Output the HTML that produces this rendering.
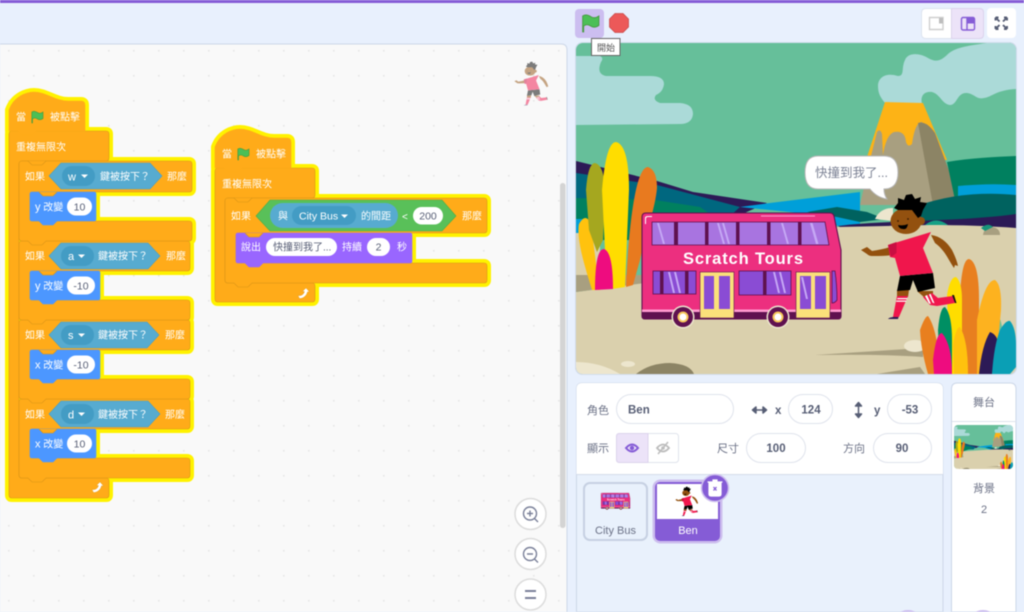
<!DOCTYPE html>
<html><head><meta charset="utf-8"><style>
html,body{margin:0;padding:0;width:1024px;height:612px;overflow:hidden;background:#E8F0FD}
svg{display:block;filter:blur(.45px)}
text{font-family:"Liberation Sans","Noto Sans CJK TC",sans-serif}
.w{fill:#fff;font-size:10px}
.g{fill:#575E75;font-size:10.5px}
.m{fill:#575E75;font-size:11px}
.b{fill:#575E75;font-size:12px;font-weight:bold}
.l{fill:#6b7186;font-size:11px}
</style></head><body>
<svg width="1024" height="612" viewBox="0 0 1024 612" xmlns="http://www.w3.org/2000/svg">
<defs>
<pattern id="dots" x="8" y="0" width="25" height="25" patternUnits="userSpaceOnUse"><rect x="0" y="0" width="1.6" height="1.6" fill="#e6e6e6"/></pattern>
<clipPath id="stc"><rect x="576" y="43" width="440" height="331" rx="7"/></clipPath>
<clipPath id="thc"><rect x="954" y="425" width="59" height="44" rx="4"/></clipPath>
<path id="flag" d="M0.8 12V1C3-.5 5 .5 6.5 1.5C8 2.5 10 2.5 12 1V7.5C10 9 8 9 6.5 8C5 7 3 6.5 1.5 8V12Z" fill="#4CBF56" stroke="#45993D" stroke-width=".6"/>
<path id="h1" d="M9 131V110C14 96 27 92 34 92C46 92 55 101 68 101H81Q85 101 85 105V131H36l-4 4h-10l-4-4Z"/>
<path id="f1" d="M9 134Q9 131 12 131H106Q109 131 109 134V158Q109 161 106 161H22Q19 161 19 164V475Q19 478 22 478H106Q109 478 109 481V495Q109 498 106 498H12Q9 498 9 495Z"/>
<path id="i1" d="M19 164Q19 161 22 161H189Q192 161 192 164V189Q192 192 189 192H33Q30 192 30 195V218Q30 221 33 221H189Q192 221 192 224V238Q192 241 189 241H46l-4 4h-10l-4-4H22Q19 241 19 238Z"/>
<path id="i2" d="M19 244Q19 241 22 241H187Q190 241 190 244V268Q190 271 187 271H33Q30 271 30 274V297Q30 300 33 300H187Q190 300 190 303V317Q190 320 187 320H46l-4 4h-10l-4-4H22Q19 320 19 317Z"/>
<path id="i3" d="M19 323Q19 320 22 320H187Q190 320 190 323V347Q190 350 187 350H33Q30 350 30 353V376Q30 379 33 379H187Q190 379 190 382V396Q190 399 187 399H46l-4 4h-10l-4-4H22Q19 399 19 396Z"/>
<path id="i4" d="M19 402Q19 399 22 399H187Q190 399 190 402V426Q190 429 187 429H33Q30 429 30 432V455Q30 458 33 458H187Q190 458 190 461V475Q190 478 187 478H46l-4 4h-10l-4-4H22Q19 478 19 475Z"/>
<path id="b1" d="M30 194Q30 192 32 192H94Q96 192 96 194V219Q96 221 94 221H57l-4 4h-10l-4-4H32Q30 221 30 219Z"/>
<path id="b2" d="M30 273Q30 271 32 271H98Q100 271 100 273V298Q100 300 98 300H57l-4 4h-10l-4-4H32Q30 300 30 298Z"/>
<path id="b3" d="M30 352Q30 350 32 350H98Q100 350 100 352V377Q100 379 98 379H57l-4 4h-10l-4-4H32Q30 379 30 377Z"/>
<path id="b4" d="M30 431Q30 429 32 429H94Q96 429 96 431V456Q96 458 94 458H57l-4 4h-10l-4-4H32Q30 458 30 456Z"/>
<path id="h2" d="M215 168V147C220 133 233 129 240 129C252 129 261 138 274 138H287Q291 138 291 142V168H242l-4 4h-10l-4-4Z"/>
<path id="f2" d="M215 171Q215 168 218 168H312Q315 168 315 171V195Q315 198 312 198H228Q225 198 225 201V280Q225 283 228 283H312Q315 283 315 286V299Q315 302 312 302H218Q215 302 215 299Z"/>
<path id="i5" d="M225 201Q225 198 228 198H484Q487 198 487 201V230Q487 233 484 233H239Q236 233 236 236V260Q236 263 239 263H484Q487 263 487 266V280Q487 283 484 283H252l-4 4h-10l-4-4H228Q225 283 225 280Z"/>
<path id="p1" d="M236 235Q236 233 238 233H410Q412 233 412 235V261Q412 263 410 263H263l-4 4h-10l-4-4H238Q236 263 236 261Z"/>
<path id="rep" d="M0 7.500C3 8 5.500 7 6.500 3.500L4.500 3.500L8 0L11.500 4L9.500 3.800C8.500 8 5 10.500 1.500 10.500Z" fill="#fff" stroke="#CF8B17" stroke-width=".3"/>

<g id="scene">
<rect x="576" y="43" width="440" height="331" fill="#66BF9A"/>
<path fill="#ABDAD8" d="M576 56H600Q604 58 601 62Q596 74 606 76H650Q664 76 664 84Q663 92 656 95Q652 100 660 103H680Q693 104 693 114Q692 124 680 124L576 125Z"/>
<path fill="#ABDAD8" d="M1016 43H987C965 46 955 48 948 54C940 62 935 62 928 58C920 53 908 52 905 60C901 68 905 76 898 76C885 72 878 78 878 86C878 94 881 98 885 103L922 104C920 96 924 91 932 92C940 94 942 104 950 105C957 105 957 93 966 93C974 93 976 100 984 98C992 97 996 90 1016 89Z"/>
<path fill="#FDB316" d="M885 102L923 103L947 160H866Z"/>
<path fill="#A89F80" d="M860 205L870 160L877 132Q880 128 882 134L883 155Q886 135 894 132Q905 130 906 142Q908 148 912 144Q915 122 922 122L960 205Z"/>
<path fill="#8C8465" d="M918 123Q926 120 935 133L958 195L933 205Z"/>
<path fill="#00805F" d="M947 162C970 158 995 157 1016 156V200H955Z"/>
<path fill="#009FD9" d="M958 186Q990 183 1016 185V200H958Z"/>
<path fill="#2C1A56" d="M576 161L657 181L693 192L767 203L740 215H576Z"/>
<path fill="#00677F" d="M576 173L657 185L740 207L720 225H576Z"/>
<path fill="#00805F" d="M576 198L655 200L700 207L713 216L642 240H576Z"/>
<path fill="#009FD9" d="M740 207L770 203L860 192V224L838 226L810 214Z"/>
<path fill="#009FD9" d="M576 219H590V235H576Z"/>
<path fill="#00625F" d="M807 212L837 207L867 212L885 219L860 222L837 217Z"/>
<path fill="#00625F" d="M917 206C950 194 985 192 1016 195V218L900 226Z"/>
<path fill="#2C1A56" d="M838 226C880 220 960 222 1016 214V232L930 228L850 232Z"/>
<path fill="#DAD0AD" d="M576 292L642 283V240L838 227L930 225C960 225 990 226 1016 228V374H576Z"/>
<path fill="#DAD0AD" d="M576 233H600V276H576Z"/>
<path fill="#A89F80" d="M576 275H645V283L576 292Z"/>
<path fill="#EDE6CE" d="M875 219Q880 208 893 208V221Z"/>
<path fill="#16A085" d="M925 225Q936 216 948 225Z"/>
<path fill="#A89F80" d="M983 235Q984 227 992 227Q1000 228 1000 235Z"/>
<path fill="#17957a" d="M981 228Q988 222 993 227L985 231Z"/>
<path fill="#FFC20E" d="M592 290C586 270 576 240 579 224Q585 213 590 222C594 240 596 270 600 290Z"/>
<path fill="#A5A71F" d="M586 190Q588 163 595 163Q604 165 605 190L603 240L597 252L589 230Z"/>
<path fill="#FFDD00" d="M602 190Q606 142 616 142Q629 145 629 190L625 287L612 289L605 250Z"/>
<path fill="#E87A1F" d="M626 287C628 240 634 167 648 167Q657 170 657 188C655 210 645 235 640 260L633 285Z"/>
<path fill="#EE0C7F" d="M595 290Q595 249 604 249Q613 252 613 289Z"/>
<path fill="#EDE6CE" d="M576 374V362Q600 362 620 374Z"/>
<ellipse cx="628" cy="364" rx="7" ry="3" fill="#EDE6CE"/>
<path fill="#8C8465" d="M636 374Q650 363 670 363Q690 364 694 374Z"/>
<path fill="#A89F80" d="M815 355L923 348L923 357Q880 354 815 355Z"/>
<path fill="#A89F80" d="M877 374L920 367L925 374Z"/>
<ellipse cx="915" cy="346" rx="11" ry="6" fill="#EDE6CE"/>
<path fill="#6CC19C" d="M990 374V302Q1002 315 1003 335V374Z"/>
<path fill="#E87F1F" d="M960 374V295Q962 259 969 259Q979 262 979 300V374Z"/>
<path fill="#E87F1F" d="M920 330Q925 316 928 316Q938 330 940 374H928Q921 350 920 330Z"/>
<path fill="#FDB21F" d="M977 374V320Q985 280 995 280Q1002 285 1001 310L995 374Z"/>
<path fill="#FFDD00" d="M947 295Q950 277 956 277Q962 282 962 300V374H950Z"/>
<path fill="#008F63" d="M938 330Q940 307 945 307Q952 315 952 340V374H940Z"/>
<path fill="#FFC20E" d="M953 345Q956 327 960 327Q968 340 968 374H954Z"/>
<path fill="#EE0C7F" d="M933 360Q936 333 942 333Q952 345 952 374H934Z"/>
<path fill="#2C1A56" d="M979 374Q982 345 990 332Q998 335 998 345L992 374Z"/>
<path fill="#0A9FB5" d="M992 374Q994 345 1000 330Q1006 320 1010 321Q1016 328 1016 345V367L1010 374Z"/>
</g>

<g id="bus">
<path fill="#EC2F7F" stroke="#5F114F" stroke-width="1.100" d="M642 217Q642 213 646 213H830Q833 213 834 216L841 250V316Q841 319 838 319H645Q642 319 642 316Z"/>
<path fill="#5F114F" d="M642 312H841V316Q841 319 838 319H645Q642 319 642 316Z"/>
<rect x="642" y="309.500" width="199" height="2.500" fill="#FF9AD0"/>
<path fill="#fff" d="M645 224V218Q645 216 648 216H652V217H648Q646 217 646 219V224Z"/>
<path fill="#FF9AD0" d="M761 215.500H815V216.500H761Z"/>
<path fill="#A874E0" stroke="#5F114F" stroke-width=".8" d="M652 222H825L829 245H652Z"/>
<rect x="674" y="222" width="4" height="23" fill="#5F114F"/>
<rect x="705" y="222" width="3.500" height="23" fill="#5F114F"/>
<rect x="736" y="222" width="3.500" height="23" fill="#5F114F"/>
<rect x="767" y="222" width="3.500" height="23" fill="#5F114F"/>
<rect x="798" y="222" width="3.500" height="23" fill="#5F114F"/>
<path fill="#C6A8F5" d="M657 223l2 0l6 21h-2ZM717 223l2 0l6 21h-2ZM722 223l2 0l6 21h-2ZM781 223l2 0l6 21h-2ZM810 223l2.500 0l6 21h-2.500Z"/>
<text x="683" y="264" textLength="120" lengthAdjust="spacing" style="font-family:'Liberation Sans',sans-serif;font-size:16.500px;font-weight:bold;fill:#fff">Scratch Tours</text>
<rect x="653" y="271" width="43" height="23" fill="#8A4CD4" stroke="#5F114F" stroke-width=".8"/>
<rect x="660" y="271" width="3.500" height="23" fill="#5F114F"/>
<rect x="685" y="271" width="3.500" height="23" fill="#5F114F"/>
<path fill="#C6A8F5" d="M668 272h2l5 21h-2ZM674 272h2l5 21h-2Z"/>
<rect x="739" y="271" width="52" height="24" fill="#8A4CD4" stroke="#5F114F" stroke-width=".8"/>
<rect x="763" y="271" width="3.500" height="24" fill="#5F114F"/>
<path fill="#C6A8F5" d="M773 272h2l5 21h-2ZM779 272h2l5 21h-2Z"/>
<path fill="#8A4CD4" stroke="#5F114F" stroke-width=".8" d="M832 271H835Q837 285 837 300Q835 303 832 303Z"/>
<g fill="#FBE07A" stroke="#5F114F" stroke-width=".6"><rect x="700" y="272" width="34" height="46"/><rect x="796" y="272" width="34" height="46"/></g>
<g fill="#8A4CD4"><rect x="704" y="276" width="10" height="33"/><rect x="719" y="276" width="11" height="33"/><rect x="800" y="276" width="11" height="33"/><rect x="815" y="276" width="11" height="33"/></g>
<path fill="#C6A8F5" d="M801 277h2l5 22h-2Z"/>
<g><circle cx="683" cy="317" r="11.500" fill="#EDE6CE"/><circle cx="683" cy="317" r="10" fill="#5F114F"/><circle cx="683" cy="317" r="5.500" fill="#F7C95C"/><circle cx="683" cy="317" r="3.500" fill="#fff"/><circle cx="778" cy="317" r="11.500" fill="#EDE6CE"/><circle cx="778" cy="317" r="10" fill="#5F114F"/><circle cx="778" cy="317" r="5.500" fill="#F7C95C"/><circle cx="778" cy="317" r="3.500" fill="#fff"/></g>
</g>

<g id="ben">
<path fill="#93510F" d="M931 235C940 236 947 242 952 250C955 256 957 261 958 266L955 265L954 268C950 262 947 256 944 252C941 248 938 245 935 243Z"/>
<path fill="#93510F" d="M890 247C884 249 878 250 872 251L867 247L861 250L867 254C869 256 871 256 873 256C880 256 886 256 892 255Z"/>
<path fill="#93510F" d="M897 290H909L908 297H897ZM917 291H933L933 296L925 298Z"/>
<path fill="#F0164C" d="M897 296H908L899 317H893Z"/>
<path fill="#fff" d="M897.500 298h10l-.5 1.300h-10ZM896.500 300.500h10l-.5 1.200h-10Z"/>
<path fill="#2C1A56" d="M893 317l5.500 0l-.5 2h-10Q889 317.500 893 317Z"/>
<path fill="#F0164C" d="M923 297L932 293L938 298L953 296L955 303L937 306L930 305Z"/>
<path fill="#fff" d="M925 296l2 -1l4 9l-2 -.5ZM929 294.500l1.500 -.8l4 9.500l-1.800 -.5Z"/>
<path fill="#111" d="M952 295l2 0l2.500 8l-1.500 0Z"/>
<path fill="#000" d="M900 276L933 273L935 288L918 292L913 280L910 290L897 291Z"/>
<path fill="#F0164C" d="M888 245L931 232L923 248L933 273L900 276L895 258L890 257Z"/>
<path fill="#C90F42" d="M888 245L896.500 242L896.500 253L891 257Z"/>
<ellipse cx="906" cy="221" rx="15.500" ry="13" fill="#93510F"/>
<circle cx="921" cy="221" r="4" fill="#93510F"/>
<path fill="#000" d="M894 208L898 203L898 198L904 200L906 195L912 194L915 199L921 197L920 202L927 203L923 210L921 216L918 218L912 210L898 210Z"/>
<path fill="#000" d="M898 225Q904 226 908 224Q907 230 903 229Q899 229 898 225Z"/>
<circle cx="898" cy="221" r="0.900" fill="#3a1d05"/><circle cx="908" cy="219" r="0.900" fill="#3a1d05"/>
</g>
</defs>

<!-- page -->
<rect width="1024" height="612" fill="#E8F0FD"/>
<rect width="1024" height="3" fill="#855CD6"/>

<!-- workspace -->
<path d="M-2 44H561Q567 44 567 50V614H-2Z" fill="#F9F9F9" stroke="#CCD7E8" stroke-width="1"/>
<path d="M0 45H560Q566 45 566 50V612H0Z" fill="url(#dots)"/>
<rect x="560" y="183" width="5.500" height="345" rx="2.700" fill="#D4D4D4"/>

<!-- ghost ben -->
<g transform="translate(213 -6.250) scale(.35)" opacity=".5"><use href="#ben"/></g>

<!-- yellow glow -->
<g fill="#FFF200" stroke="#FFF200" stroke-width="8" stroke-linejoin="round">
<use href="#h1"/><use href="#f1"/><use href="#i1"/><use href="#i2"/><use href="#i3"/><use href="#i4"/><use href="#b1"/><use href="#b2"/><use href="#b3"/><use href="#b4"/>
<use href="#h2"/><use href="#f2"/><use href="#i5"/><use href="#p1"/>
</g>

<!-- script 1 -->
<g fill="#FFAB19" stroke="#DA9518" stroke-width=".6">
<use href="#f1"/><use href="#i4"/></g>
<use href="#b4" fill="#4C97FF" stroke="#4C97FF" stroke-width=".6"/>
<use href="#i3" fill="#FFAB19" stroke="#DA9518" stroke-width=".6"/>
<use href="#b3" fill="#4C97FF" stroke="#4C97FF" stroke-width=".6"/>
<use href="#i2" fill="#FFAB19" stroke="#DA9518" stroke-width=".6"/>
<use href="#b2" fill="#4C97FF" stroke="#4C97FF" stroke-width=".6"/>
<use href="#i1" fill="#FFAB19" stroke="#DA9518" stroke-width=".6"/>
<use href="#b1" fill="#4C97FF" stroke="#4C97FF" stroke-width=".6"/>
<use href="#h1" fill="#FFAB19" stroke="#FFAB19" stroke-width=".6"/>
<g fill="#FFAB19" stroke="#DA9518" stroke-width=".6">
<path d="M28 161l4 4h10l4-4"/><path d="M39 192l4 4h10l4-4"/><path d="M39 271l4 4h10l4-4"/><path d="M39 350l4 4h10l4-4"/><path d="M39 429l4 4h10l4-4"/>
</g>
<g fill="#57ABD0" stroke="#4A9FC4" stroke-width=".6">
<path d="M49 176L61 163H150L162 176L150 189H61Z"/>
<path d="M49 256L61 243H148L160 256L148 269H61Z"/>
<path d="M49 335L61 322H147L159 335L147 348H61Z"/>
<path d="M49 414L61 401H148L160 414L148 427H61Z"/>
</g>
<g fill="#439CC4">
<rect x="62" y="166" width="33" height="20" rx="10"/>
<rect x="61" y="246" width="33" height="20" rx="10"/>
<rect x="61" y="325" width="33" height="20" rx="10"/>
<rect x="61" y="404" width="33" height="20" rx="10"/>
</g>
<g fill="#fff">
<path d="M81 174.500h7l-3.500 3.500Z"/><path d="M78 254.500h7l-3.500 3.500Z"/><path d="M78 333.500h7l-3.500 3.500Z"/><path d="M78 412.500h7l-3.500 3.500Z"/>
<rect x="67" y="197.500" width="25" height="18" rx="9"/>
<rect x="67" y="276.500" width="28" height="18" rx="9"/>
<rect x="67" y="355.500" width="28" height="18" rx="9"/>
<rect x="67" y="434.500" width="25" height="18" rx="9"/>
</g>
<use href="#flag" transform="translate(31 111)"/>
<text class="w" x="16" y="120.500">當</text><text class="w" x="50" y="120.500">被點擊</text>
<text class="w" x="16" y="150.500">重複無限次</text>
<text class="w" x="25" y="180">如果</text><text class="w" x="68" y="180.500" style="font-size:11px">w</text><text class="w" x="100" y="180">鍵被按下？</text><text class="w" x="167" y="180">那麼</text>
<text class="w" x="25" y="259.500">如果</text><text class="w" x="68" y="260" style="font-size:11px">a</text><text class="w" x="98" y="259.500">鍵被按下？</text><text class="w" x="166" y="259.500">那麼</text>
<text class="w" x="25" y="338.500">如果</text><text class="w" x="68" y="339" style="font-size:11px">s</text><text class="w" x="98" y="338.500">鍵被按下？</text><text class="w" x="165" y="338.500">那麼</text>
<text class="w" x="25" y="418">如果</text><text class="w" x="68" y="418.500" style="font-size:11px">d</text><text class="w" x="98" y="418">鍵被按下？</text><text class="w" x="165" y="418">那麼</text>
<text class="w" x="35" y="210.500"><tspan style="font-size:11px">y</tspan> 改變</text><text class="g" x="79.500" y="210.500" text-anchor="middle">10</text>
<text class="w" x="35" y="289.500"><tspan style="font-size:11px">y</tspan> 改變</text><text class="g" x="81" y="289.500" text-anchor="middle">-10</text>
<text class="w" x="35" y="368.500"><tspan style="font-size:11px">x</tspan> 改變</text><text class="g" x="81" y="368.500" text-anchor="middle">-10</text>
<text class="w" x="35" y="447.500"><tspan style="font-size:11px">x</tspan> 改變</text><text class="g" x="79.500" y="447.500" text-anchor="middle">10</text>
<use href="#rep" transform="translate(92 482)"/>

<!-- script 2 -->
<g fill="#FFAB19" stroke="#DA9518" stroke-width=".6"><use href="#f2"/><use href="#i5"/></g>
<use href="#p1" fill="#9966FF" stroke="#9966FF" stroke-width=".6"/>
<use href="#h2" fill="#FFAB19" stroke="#FFAB19" stroke-width=".6"/>
<g fill="#FFAB19" stroke="#DA9518" stroke-width=".6"><path d="M234 198l4 4h10l4-4"/><path d="M245 233l4 4h10l4-4"/></g>
<path d="M256 216L270 200H442L456 216L442 231H270Z" fill="#59C059" stroke="#4AAE4A" stroke-width=".6"/>
<rect x="270" y="203" width="128" height="25" rx="12.500" fill="#57ABD0"/>
<rect x="292" y="206" width="64" height="19" rx="9.500" fill="#439CC4"/>
<rect x="413" y="207" width="30" height="17.500" rx="8.700" fill="#fff"/>
<rect x="266" y="238" width="71" height="18" rx="9" fill="#fff"/>
<rect x="367" y="238" width="23" height="18" rx="9" fill="#fff"/>
<path d="M341 214.500h7l-3.500 3.500Z" fill="#fff"/>
<use href="#flag" transform="translate(237 148)"/>
<text class="w" x="222" y="157.500">當</text><text class="w" x="256" y="157.500">被點擊</text>
<text class="w" x="222" y="187.500">重複無限次</text>
<text class="w" x="231" y="219.500">如果</text>
<text class="w" x="278" y="219.500">與</text>
<text class="w" x="299" y="219.500" style="font-size:10.500px">City Bus</text>
<text class="w" x="361" y="219.500">的間距</text>
<text class="w" x="402" y="220">&lt;</text>
<text class="g" x="428" y="219.500" text-anchor="middle">200</text>
<text class="w" x="462" y="219.500">那麼</text>
<text class="w" x="241" y="250.500">說出</text>
<text class="g" x="273" y="250.500" style="font-size:10px">快撞到我了...</text>
<text class="w" x="342" y="250.500">持續</text>
<text class="g" x="378.500" y="250.500" text-anchor="middle">2</text>
<text class="w" x="397" y="250.500">秒</text>
<use href="#rep" transform="translate(298 288)"/>

<!-- controls -->
<rect x="575" y="9" width="29" height="29" rx="4" fill="#CCBEF0"/>
<use href="#flag" transform="translate(581.500 14.500) scale(1.450)"/>
<path d="M615 13.500H623L628.500 19V27L623 32.500H615L609.500 27V19Z" fill="#EC5959" stroke="#C84B4B" stroke-width=".8"/>
<rect x="921.500" y="8.500" width="62" height="30" rx="4" fill="#fff" stroke="#DCE3EF"/>
<path d="M951.500 8.500H979.500Q983.500 8.500 983.500 12.500V34.500Q983.500 38.500 979.500 38.500H951.500Z" fill="#ECE3F8" stroke="#DCD3EC"/>
<rect x="987" y="8" width="29" height="30" rx="4" fill="#fff"/>
<path d="M929.500 17.500H943V29.500H929.500Z" fill="none" stroke="#CFCFCF" stroke-width="1.400"/>
<rect x="939" y="18" width="4" height="5.500" fill="#BDBDBD"/>
<rect x="961.500" y="17.500" width="13" height="12.500" rx="1.500" fill="none" stroke="#855CD6" stroke-width="1.400"/>
<path d="M967 17.500V30" stroke="#855CD6" stroke-width="1.400"/>
<rect x="967" y="17.500" width="7.500" height="6" fill="#855CD6"/>
<g fill="#575E75" stroke="#575E75" stroke-width="1.900" stroke-linejoin="round">
<path d="M995.500 17.500L999.500 21.500M995.500 17.500V20.500M995.500 17.500H998.500"/>
<path d="M1007 17.500L1003 21.500M1007 17.500V20.500M1007 17.500H1004"/>
<path d="M995.500 29L999.500 25M995.500 29V26M995.500 29H998.500"/>
<path d="M1007 29L1003 25M1007 29V26M1007 29H1004"/>
</g>

<!-- stage -->
<g clip-path="url(#stc)">
<use href="#scene"/>
<use href="#bus"/>
<use href="#ben"/>
</g>
<rect x="575.500" y="42.500" width="441" height="332" rx="7" fill="none" stroke="#CCD7E8" stroke-width=".8"/>
<!-- tooltip -->
<rect x="591.500" y="38.500" width="28.500" height="17" fill="#fff" stroke="#666"/>
<text x="597" y="51" style="font-size:9px" fill="#555">開始</text>
<!-- bubble -->
<path d="M818 156H884Q898 156 898 172.500Q898 189 884 189H884C884 193 885 196 887 199C880 198 874 194 870 189H818Q805 189 805 172.500Q805 156 818 156Z" fill="#fff" stroke="#B5B5B5" stroke-width="1"/>
<text x="815" y="177" style="font-size:12.500px" fill="#7A8093">快撞到我了...</text>

<!-- sprite panel -->
<path d="M576.500 612V389Q576.500 383 582.500 383H936Q943 383 943 389V612Z" fill="#E9F1FC" stroke="#CCD7E8"/>
<path d="M576.500 474V389Q576.500 383 582.500 383H936Q943 383 943 389V474Z" fill="#fff"/>
<path d="M576.500 474.500H943" stroke="#D5DDEA"/>
<text class="l" x="587" y="414">角色</text>
<g fill="#fff" stroke="#DFE3EC">
<rect x="616.500" y="394.500" width="117" height="29" rx="14.500"/>
<rect x="788.500" y="394.500" width="44" height="29" rx="14.500"/>
<rect x="887.500" y="394.500" width="44" height="29" rx="14.500"/>
<rect x="746.500" y="433.500" width="59" height="29" rx="14.500"/>
<rect x="873.500" y="433.500" width="58" height="29" rx="14.500"/>
</g>
<text class="b" x="628" y="413.500" style="font-size:11.500px">Ben</text>
<text class="b" x="811" y="413.500" text-anchor="middle" style="font-size:11.500px">124</text>
<text class="b" x="910" y="413.500" text-anchor="middle" style="font-size:11.500px">-53</text>
<text class="b" x="776" y="452" text-anchor="middle" style="font-size:11.500px">100</text>
<text class="b" x="902" y="452" text-anchor="middle" style="font-size:11.500px">90</text>
<text class="b" x="775" y="414" style="font-size:11.500px">x</text>
<text class="b" x="874" y="414" style="font-size:11.500px">y</text>
<path d="M753 410H766M756 407L752.500 410L756 413ZM763 407L766.500 410L763 413Z" fill="#575E75" stroke="#575E75" stroke-width="1.500" stroke-linejoin="round"/>
<path d="M858.500 403V417M855.500 406L858.500 402.500L861.500 406ZM855.500 414L858.500 417.500L861.500 414Z" fill="#575E75" stroke="#575E75" stroke-width="1.500" stroke-linejoin="round"/>
<text class="l" x="587" y="452">顯示</text>
<text class="l" x="717" y="452">尺寸</text>
<text class="l" x="843" y="452">方向</text>
<rect x="616.500" y="433.500" width="62" height="29" rx="3" fill="#fff" stroke="#E0E4EC"/>
<path d="M616.500 436.500Q616.500 433.500 619.500 433.500H648V462.500H619.500Q616.500 462.500 616.500 459.500Z" fill="#ECE3F8" stroke="#DCD3EC"/>
<path d="M626 448Q632 441 638 448Q632 455 626 448Z" fill="none" stroke="#855CD6" stroke-width="2"/>
<circle cx="632" cy="448" r="2.200" fill="#855CD6"/>
<path d="M657 448Q663 441 669 448Q663 455 657 448Z" fill="none" stroke="#BDBDBD" stroke-width="1.800"/>
<circle cx="663" cy="448" r="1.800" fill="#BDBDBD"/>
<path d="M658 454L668 442" stroke="#BDBDBD" stroke-width="1.500"/>

<!-- sprite tiles -->
<rect x="584" y="483" width="63" height="57" rx="6" fill="#E9F1FC" stroke="#C6D0E2" stroke-width="2"/>
<g transform="translate(507.300 461.900) scale(.146)"><use href="#bus"/></g>
<text x="615.500" y="534" text-anchor="middle" style="font-size:11px" fill="#6b7186">City Bus</text>
<rect x="652.500" y="479.500" width="70" height="64" rx="8" fill="#CDBEEE"/>
<rect x="655" y="482" width="65" height="59" rx="5" fill="#855CD6"/>
<path d="M657 484H718V519H657Z" fill="#fff"/>
<g transform="translate(473 441) scale(.235)"><use href="#ben"/></g>
<text x="688" y="534" text-anchor="middle" style="font-size:11px" fill="#fff">Ben</text>
<circle cx="715" cy="488" r="13.500" fill="#855CD6" stroke="#CDBEEE" stroke-width="1.500"/>
<path d="M709 483H721V494Q721 496 719 496H711Q709 496 709 494ZM707.500 482H722.500M713 482V480H717V482" fill="#fff" stroke="#fff" stroke-width="1.200"/>
<path d="M713.500 487L716.500 490.500M716.500 487L713.500 490.500" stroke="#855CD6" stroke-width="1.300"/>

<!-- stage panel -->
<path d="M951.500 612V389Q951.500 383 957.500 383H1010Q1016 383 1016 389V612Z" fill="#fff" stroke="#CCD7E8"/>
<path d="M952 421.500H1016" stroke="#DDE3EC"/>
<text class="l" x="984" y="406" text-anchor="middle">舞台</text>
<g clip-path="url(#thc)"><g transform="translate(876.900 419.200) scale(.134)"><use href="#scene"/></g></g>
<text class="l" x="984" y="492" text-anchor="middle">背景</text>
<text class="l" x="984" y="513" text-anchor="middle">2</text>
<circle cx="908" cy="626" r="16" fill="#CDBEEE"/>
<circle cx="983" cy="626" r="16" fill="#CDBEEE"/>

<!-- zoom controls -->
<g fill="#fff" stroke="#DCDCDC" stroke-width="1.500">
<circle cx="530.500" cy="514" r="15.500"/><circle cx="530.500" cy="554" r="15.500"/><circle cx="530.500" cy="594.500" r="15.500"/>
</g>
<g fill="none" stroke="#7A8099" stroke-width="1.400">
<circle cx="530" cy="513.500" r="6.500"/><path d="M534.500 518.500L538 522M527 513.500H533M530 510.500V516.500"/>
<circle cx="530" cy="554" r="6.500"/><path d="M534.500 559L538 562.500M527 554H533"/>
<path d="M525 591H536M525 598H536" stroke-width="2"/>
</g>
</svg>
</body></html>
